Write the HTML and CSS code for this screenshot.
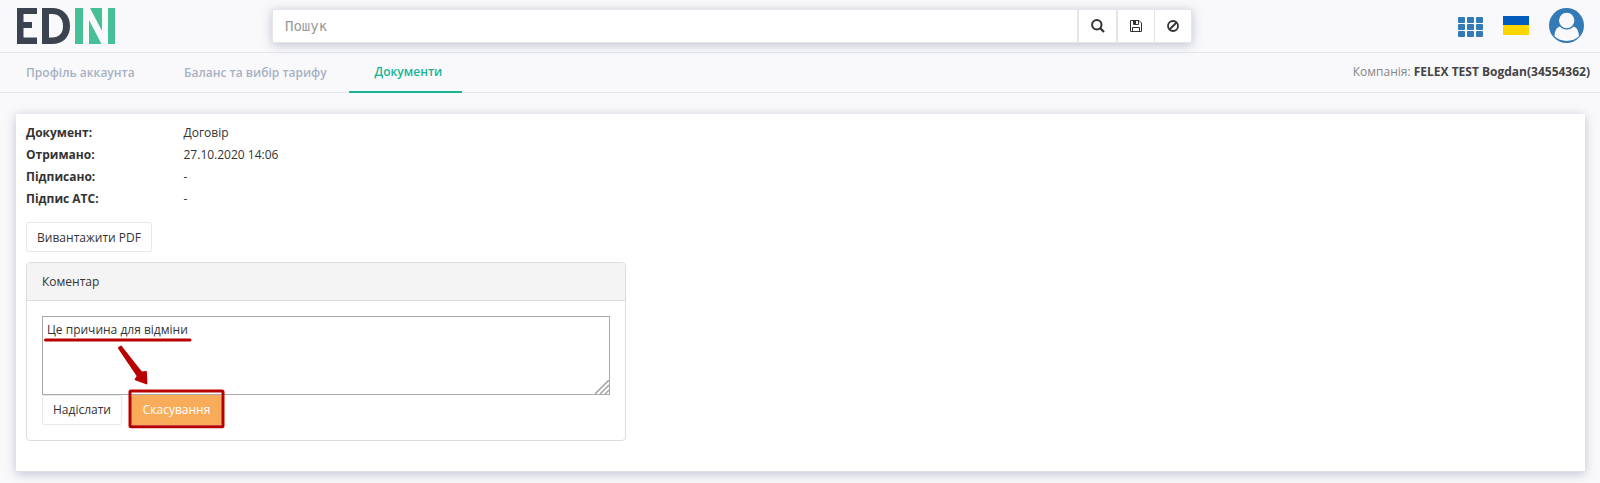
FILE: index.html
```html
<!DOCTYPE html>
<html lang="uk">
<head>
<meta charset="utf-8">
<title>EDIN</title>
<link rel="stylesheet" href="styles.css">
</head>
<body>
<header class="header">
  <svg class="logo" width="100" height="38" viewBox="0 0 100 38" aria-label="EDIN">
    <path class="logo-dark" d="M1 1h20v6H7.500v8H16v6H7.500v9.500H21V37H1z"/>
    <path class="logo-dark" fill-rule="evenodd" d="M26 1h10c11 0 18 7 18 18s-7 18-18 18H26zM33 7v23.500h3c7 0 11-4 11-11.500S43 7 36 7z"/>
    <path class="logo-green" d="M59 1h8v36h-8zM92 1h7v36h-7zM74 1h12v23zM73 13l12.500 24H73z"/>
  </svg>
  <div class="search">
    <input class="search-input" type="text" placeholder="Пошук">
    <button class="search-btn btn-find"><svg width="14" height="14" viewBox="0 0 14 14"><circle cx="5.800" cy="5.800" r="4.700" fill="none" stroke="#333" stroke-width="2"/><path d="M9 9l4 4" stroke="#333" stroke-width="2.300"/></svg></button>
    <button class="search-btn btn-save"><svg width="12" height="12" viewBox="0 0 12 12" fill="none" stroke="#333"><path d="M.5.5h8.500l2.500 2.500v8.500H.5zM2.500 11.500v-4h7v4M3.500.5v4h5v-4"/><path d="M4 2.500h2" stroke-width="3"/></svg></button>
    <button class="search-btn btn-ban"><svg width="12" height="12" viewBox="0 0 12 12" fill="none" stroke="#333" stroke-width="1.800"><circle cx="6" cy="6" r="5"/><path d="M2.500 9.500l7-7"/></svg></button>
  </div>
  <div class="tools">
    <svg class="apps" width="25" height="20" viewBox="0 0 25 20"><g fill="#337ab7"><rect width="7" height="6" rx="1"/><rect x="9" width="7" height="6" rx="1"/><rect x="18" width="7" height="6" rx="1"/><rect y="7" width="7" height="6" rx="1"/><rect x="9" y="7" width="7" height="6" rx="1"/><rect x="18" y="7" width="7" height="6" rx="1"/><rect y="14" width="7" height="6" rx="1"/><rect x="9" y="14" width="7" height="6" rx="1"/><rect x="18" y="14" width="7" height="6" rx="1"/></g></svg>
    <div class="flag"></div>
    <svg class="avatar" width="36" height="36" viewBox="0 0 36 36"><circle cx="17.500" cy="18.500" r="17.500" fill="#337ab7"/><path d="M5.500 29.300c.3-5.500 2-9.300 6-9.800 3.500 3.600 8.900 3.600 12.400 0 4 .5 5.800 4.300 6.100 9.800-6 6.200-18.500 6.200-24.500 0z" fill="#f9f9fb"/><circle cx="17.700" cy="13.500" r="8.400" fill="#f9f9fb" stroke="#337ab7" stroke-width="1.400"/></svg>
  </div>
</header>
<nav class="nav">
  <a class="tab tab-profile">Профіль аккаунта</a>
  <a class="tab tab-balance">Баланс та вибір тарифу</a>
  <a class="tab tab-active">Документи</a>
  <div class="company">Компанія: <b>FELEX TEST Bogdan(34554362)</b></div>
</nav>
<main class="card">
  <dl class="info">
    <dt>Документ:</dt><dd>Договір</dd>
    <dt>Отримано:</dt><dd>27.10.2020 14:06</dd>
    <dt>Підписано:</dt><dd>-</dd>
    <dt>Підпис АТС:</dt><dd>-</dd>
  </dl>
  <button class="btn btn-pdf">Вивантажити PDF</button>
  <section class="panel">
    <div class="panel-head">Коментар</div>
    <div class="panel-body">
      <div class="comment" contenteditable="true">Це причина для відміни
        <svg class="grip" width="14" height="14" viewBox="0 0 14 14"><path d="M0 14L14 0M5 14l9-9M10 14l4-4" stroke="#aaa" stroke-width="1.600"/></svg>
      </div>
      <div class="actions">
        <button class="btn btn-send">Надіслати</button>
        <button class="btn btn-cancel">Скасування</button>
      </div>
      <svg class="marks" width="190" height="100" viewBox="0 0 190 100">
        <path d="M3.500 10H148" stroke="#b80000" stroke-width="3" stroke-linecap="round"/>
        <path d="M79 16.500l20.500 26 4.500-.5.500 11.500-11-4 2.200-3.500L76.800 18z" fill="#b80000" stroke="#b80000" stroke-width="1.800" stroke-linejoin="round"/>
        <rect x="88" y="61" width="93" height="35.700" rx="1" fill="none" stroke="#b80000" stroke-width="3"/>
      </svg>
    </div>
  </section>
</main>
</body>
</html>
```

FILE: styles.css
```css
* { box-sizing: border-box; }
body {
  margin: 0;
  height: 483px;
  overflow: hidden;
  background: #f9f9fb;
  color: #333;
  font: 12px/22px "Open Sans", "Noto Sans", sans-serif;
}
button { font: inherit; color: inherit; padding: 0; }
svg { display: block; flex: none; }

.header {
  display: flex;
  height: 53px;
  padding: 7px 15px 0 16px;
  border-bottom: 1px solid #e4e6ea;
}
.logo-dark { fill: #3a434f; }
.logo-green { fill: #47bf97; }
.search {
  display: flex;
  width: 920px;
  height: 34px;
  margin: 2px 0 0 156px;
  border: 1px solid #e4e5e8;
  background: #fff;
  box-shadow: 0 2px 10px rgba(80, 90, 130, .34);
}
.search-input {
  flex: 1;
  min-width: 0;
  padding: 0 12px;
  border: 0;
  font: 14px "DejaVu Sans Mono", monospace;
}
.search-input::placeholder { color: #999; }
.search-btn {
  display: flex;
  align-items: center;
  justify-content: center;
  background: #fff;
  border: 0 solid #e4e5e8;
}
.btn-find { width: 39px; border-left-width: 2px; }
.btn-save { width: 38px; border-left-width: 2px; }
.btn-ban { width: 37px; border-left-width: 1px; }
.tools { display: flex; margin-left: auto; }
.apps { margin-top: 10px; }
.flag {
  width: 26px;
  height: 19px;
  margin: 9px 20px 0;
  background: linear-gradient(#005bbb 50%, #ffd500 50%);
}

.nav {
  display: flex;
  height: 40px;
  padding: 0 10px 0 26px;
  border-bottom: 1px solid #e4e6ea;
  line-height: 38px;
  white-space: nowrap;
}
.tab { color: #a7b1c2; font-weight: 600; line-height: 40px; }
.tab-profile { width: 158px; }
.tab-balance { width: 165px; }
.tab-active {
  width: 113px;
  height: 40px;
  padding-left: 25.500px;
  border-bottom: 2px solid #1ab394;
  color: #1ab394;
  line-height: 38px;
}
.company { margin-left: auto; color: #888; }
.company b { color: #444; }

.card {
  height: 358px;
  margin: 21px 15px 0 16px;
  padding: 8px 10px;
  background: #fff;
  border-bottom: 1px solid #dfe1e8;
  box-shadow: 0 2px 10px rgba(80, 90, 130, .34);
}
.info {
  display: grid;
  grid-template-columns: 157.500px auto;
  grid-auto-rows: 22px;
  margin: 0 0 12px;
}
.info dt { font-weight: 700; }
.info dd { margin: 0; }
.btn {
  display: block;
  height: 30px;
  background: #fff;
  border: 1px solid #e7eaec;
  border-radius: 2px;
}
.btn-pdf { width: 126px; padding-top: 2px; }
.panel {
  width: 600px;
  height: 179px;
  margin-top: 10px;
  border: 1px solid #ddd;
  border-radius: 4px;
}
.panel-head {
  height: 38px;
  padding-left: 15px;
  background: #f4f4f4;
  border-bottom: 1px solid #ddd;
  border-radius: 3px 3px 0 0;
  line-height: 37px;
}
.panel-body { position: relative; padding: 15px; }
.comment {
  position: relative;
  height: 79px;
  padding: 2px 4px;
  border: 1px solid #a9a9a9;
}
.grip { position: absolute; right: 0; bottom: 0; }
.actions { display: flex; gap: 9px; }
.btn-send { width: 80px; }
.btn-cancel { width: 91px; background: #f8ac59; border-color: #f8ac59; color: #fff; }
.marks { position: absolute; left: 15px; top: 29px; pointer-events: none; }
```
